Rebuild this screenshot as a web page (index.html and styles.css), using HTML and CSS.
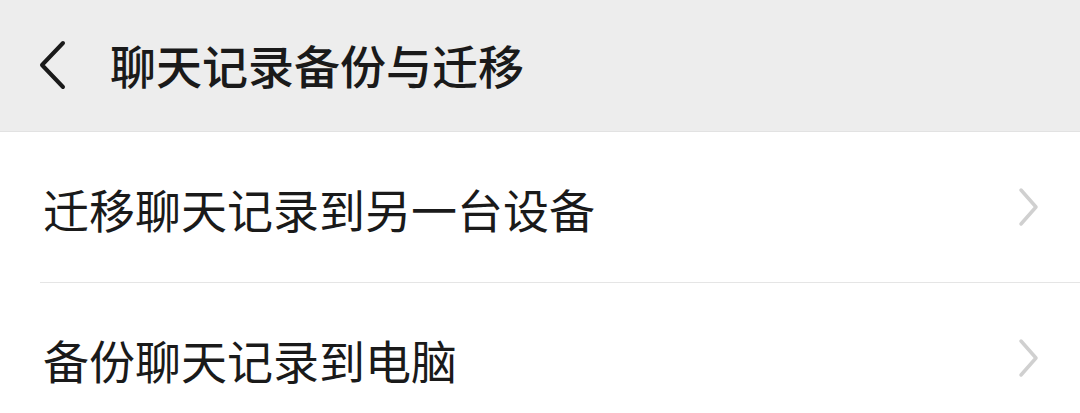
FILE: index.html
```html
<!DOCTYPE html>
<html lang="zh-CN">
<head>
<meta charset="utf-8">
<link rel="stylesheet" href="styles.css">
</head>
<body>
<header class="nav">
  <svg class="back" width="30" height="50" viewBox="0 0 30 50"><polyline points="25,3 4,25 25,47" fill="none" stroke="#1a1a1a" stroke-width="4" stroke-linecap="round" stroke-linejoin="round"/></svg>
  <h1 class="title">聊天记录备份与迁移</h1>
</header>
<ul class="list">
  <li class="item">
    <span class="label">迁移聊天记录到另一台设备</span>
    <svg class="arrow" width="22" height="40" viewBox="0 0 22 40"><polyline points="3,3 18,20 3,37" fill="none" stroke="#d0d0d0" stroke-width="3.5" stroke-linecap="round" stroke-linejoin="round"/></svg>
  </li>
  <li class="item">
    <span class="label">备份聊天记录到电脑</span>
    <svg class="arrow" width="22" height="40" viewBox="0 0 22 40"><polyline points="3,3 18,20 3,37" fill="none" stroke="#d0d0d0" stroke-width="3.5" stroke-linecap="round" stroke-linejoin="round"/></svg>
  </li>
</ul>
</body>
</html>
```
FILE: styles.css
```css
html, body {
  margin: 0;
  padding: 0;
  background: #ffffff;
  font-family: "Noto Sans CJK SC", "Noto Sans", sans-serif;
  color: #1a1a1a;
}
.nav {
  height: 131px;
  background: #ededed;
  border-bottom: 1px solid #e2e2e2;
  display: flex;
  align-items: center;
  padding-left: 38px;
  box-sizing: content-box;
}
.back {
  display: block;
  margin-top: -2px;
}
.title {
  margin: 0 0 0 42px;
  font-size: 46px;
  font-weight: 500;
  line-height: 1;
  letter-spacing: 0;
  margin-top: -4px;
}
.list {
  list-style: none;
  margin: 0;
  padding: 0;
}
.item {
  height: 151px;
  display: flex;
  align-items: center;
  justify-content: space-between;
  margin-left: 40px;
  padding-right: 40px;
  border-bottom: 1px solid #e5e5e5;
  box-sizing: border-box;
}
.label {
  font-size: 46px;
  font-weight: 400;
  line-height: 1;
  margin-left: 3px;
  margin-top: 2px;
}
.arrow {
  display: block;
}
```
